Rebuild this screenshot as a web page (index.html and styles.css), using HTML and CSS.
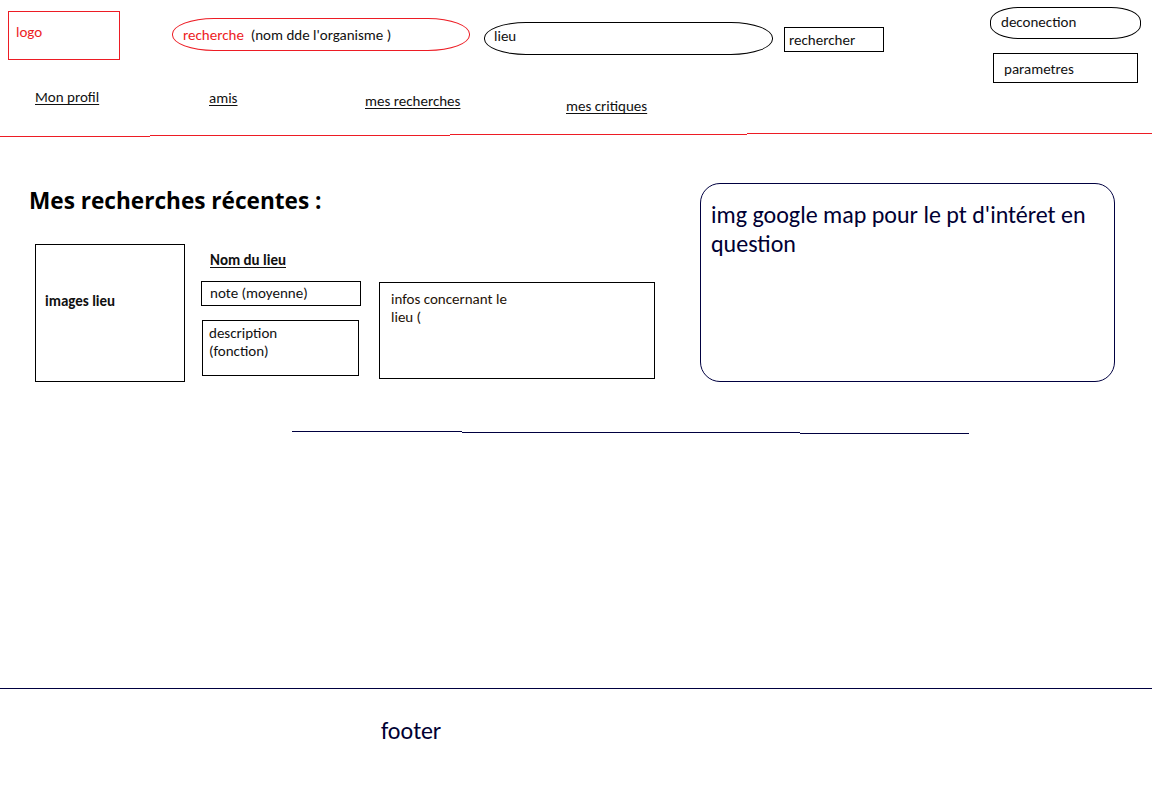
FILE: index.html
```html
<!DOCTYPE html>
<html lang="fr">
<head>
<meta charset="utf-8">
<title>Mes recherches</title>
<link rel="stylesheet" href="styles.css">
</head>
<body>
<div class="page">
  <header class="top">
    <div class="row1">
      <div class="logo">logo</div>
      <div class="search"><span class="red">recherche</span>&nbsp; (nom dde l'organisme )</div>
      <div class="lieu">lieu</div>
      <div class="btn">rechercher</div>
      <div class="account">
        <div class="deco">deconection</div>
        <div class="params">parametres</div>
      </div>
    </div>
    <nav class="nav">
      <a class="nav-link l1" href="#">Mon profil</a>
      <a class="nav-link l2" href="#">amis</a>
      <a class="nav-link l3" href="#">mes recherches</a>
      <a class="nav-link l4" href="#">mes critiques</a>
    </nav>
  </header>
  <div class="redline">
    <span class="seg s1"></span><span class="seg s2"></span><span class="seg s3"></span><span class="seg s4"></span><span class="seg s5"></span>
  </div>
  <main class="main">
    <section class="recent">
      <h1 class="title">Mes recherches récentes :</h1>
      <div class="result">
        <div class="img-box">images lieu</div>
        <div class="details">
          <div class="name">Nom du lieu</div>
          <div class="note">note (moyenne)</div>
          <div class="desc">description<br>(fonction)</div>
        </div>
        <div class="infos">infos concernant le<br>lieu (</div>
      </div>
    </section>
    <aside class="map">img google map pour le pt d'intéret en question</aside>
  </main>
  <div class="sep">
    <span class="nseg n1"></span><span class="nseg n2"></span><span class="nseg n3"></span>
  </div>
  <footer class="footer">footer</footer>
</div>
</body>
</html>
```
FILE: styles.css
```css
* { box-sizing: border-box; }
html, body { margin: 0; padding: 0; background: #fff; }
body {
  font-family: Carlito, Lato, "Open Sans", sans-serif;
  font-size: 15px;
  line-height: 18px;
  color: #111;
  width: 1152px;
  height: 792px;
  overflow: hidden;
}
.page { display: flex; flex-direction: column; height: 792px; }

.top { height: 132px; }
.row1 { display: flex; align-items: flex-start; }

.logo {
  margin: 11px 0 0 8px;
  width: 112px; height: 49px;
  border: 1px solid #ed1c24;
  color: #ed1c24;
  padding: 11px 0 0 7px;
}
.search {
  margin: 18px 0 0 52px;
  width: 298px; height: 33px;
  border: 1px solid #ed1c24;
  border-radius: 42px / 16px;
  padding: 6.5px 0 0 10px;
  white-space: pre;
}
.red { color: #ed1c24; }
.lieu {
  margin: 22px 0 0 14px;
  width: 289px; height: 33px;
  border: 1px solid #000;
  border-radius: 42px / 16px;
  padding: 4px 0 0 9px;
}
.btn {
  margin: 27px 0 0 11px;
  width: 100px; height: 25px;
  border: 1px solid #000;
  padding: 2.5px 0 0 4px;
}
.account { margin: 7px 0 0 106px; display: flex; flex-direction: column; }
.deco {
  width: 151px; height: 32px;
  border: 1px solid #000;
  border-radius: 30px / 14px;
  padding: 5px 0 0 10px;
}
.params {
  margin: 14px 0 0 3px;
  width: 145px; height: 30px;
  border: 1px solid #000;
  padding: 6px 0 0 10px;
}

.nav {
  display: grid;
  grid-template-columns: 174px 156px 201px auto;
  align-items: start;
  justify-items: start;
  margin-top: 5px;
  padding-left: 35px;
}
.nav-link {
  color: #111;
  text-decoration: underline;
  text-underline-offset: 2px;
}
.l2 { margin-top: 1px; }
.l3 { margin-top: 4px; }
.l4 { margin-top: 9px; }

.redline { display: flex; align-items: flex-start; height: 5px; }
.seg { display: block; height: 1px; background: #ed1c24; }
.s1 { width: 150px; margin-top: 4px; }
.s2 { width: 300px; margin-top: 3px; }
.s3 { width: 297px; margin-top: 2px; }
.s4 { width: 300px; margin-top: 1px; }
.s5 { flex: 1; margin-top: 1px; }

.main { display: flex; align-items: flex-start; padding-top: 46px; }
.recent { width: 700px; }
.title {
  margin: 3px 0 0 29px;
  font-family: "Open Sans", Lato, sans-serif;
  font-size: 22.6px;
  line-height: 30px;
  font-weight: 700;
  color: #000;
}
.result { display: flex; align-items: flex-start; margin-top: 28px; }
.img-box {
  margin-left: 35px;
  width: 150px; height: 138px;
  border: 1px solid #000;
  font-weight: 700;
  padding: 47px 0 0 9px;
}
.details { margin-left: 16px; display: flex; flex-direction: column; align-items: flex-start; }
.name {
  margin: 7px 0 0 9px;
  font-weight: 700;
  text-decoration: underline;
  text-underline-offset: 2px;
}
.note {
  margin-top: 12px;
  width: 160px; height: 25px;
  border: 1px solid #000;
  padding: 2px 0 0 8px;
}
.desc {
  margin: 14px 0 0 1px;
  width: 157px; height: 56px;
  border: 1px solid #000;
  padding: 2.5px 0 0 6px;
}
.infos {
  margin: 38px 0 0 18px;
  width: 276px; height: 97px;
  border: 1px solid #000;
  padding: 6.5px 0 0 11px;
  color: #1e1206;
}
.map {
  width: 415px; height: 199px;
  border: 1px solid #000040;
  border-radius: 20px;
  padding: 15.5px 10px 0 10px;
  font-size: 24px;
  line-height: 29px;
  color: #000033;
}

.sep { display: flex; align-items: flex-start; margin: 49px 0 0 292px; height: 3px; }
.nseg { display: block; height: 1px; background: #000040; }
.n1 { width: 170px; }
.n2 { width: 338px; margin-top: 1px; }
.n3 { width: 169px; margin-top: 2px; }

.footer {
  margin-top: auto;
  height: 104px;
  border-top: 1px solid #000040;
  color: #000033;
  font-size: 24px;
  line-height: 29px;
  padding: 27px 0 0 381px;
}
```
